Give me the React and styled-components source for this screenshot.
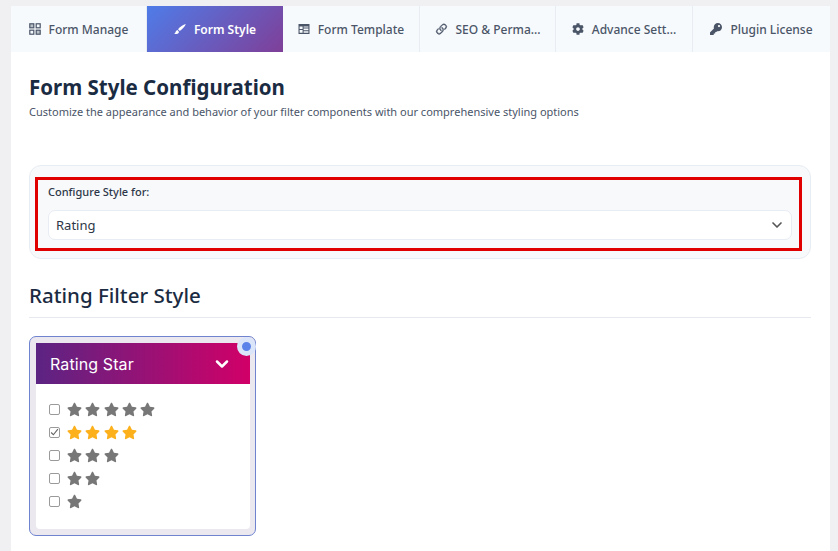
import React from "react";
import styled, { createGlobalStyle } from "styled-components";
import { FaCog, FaKey, FaStar } from "react-icons/fa";
import { BsLink45Deg } from "react-icons/bs";
import { ChevronDown } from "lucide-react";

const GlobalStyle = createGlobalStyle`
  html, body { margin: 0; padding: 0; background: #f0f0f2; height: 551px; overflow: hidden; }
  * { box-sizing: border-box; }
  body { font-family: "Noto Sans", "Open Sans", sans-serif; }
`;

const Page = styled.div`
  width: 838px;
  height: 551px;
  padding: 6px 8px 0 11px;
  overflow: hidden;
`;

const Panel = styled.div`
  background: #fff;
  height: 545px;
`;

const TabBar = styled.div`
  display: flex;
  height: 46px;
  background: #f7fafc;
`;

const Tab = styled.div`
  width: ${(p) => p.$w}px;
  flex: none;
  display: flex;
  align-items: center;
  justify-content: center;
  gap: 8px;
  font-size: 12px;
  font-weight: ${(p) => (p.$active ? 600 : 500)};
  color: ${(p) => (p.$active ? "#fff" : "#4a5568")};
  background: ${(p) => (p.$active ? "linear-gradient(135deg, #4f7ce8, #7f3f98)" : "transparent")};
  border-right: ${(p) => (p.$active || p.$last ? "none" : "1px solid #e8edf3")};
  white-space: nowrap;
  svg { width: 12px; height: 12px; flex: none; }
`;

const LinkGlyph = styled(BsLink45Deg)`
  && { width: 15px; height: 15px; margin-right: -2px; stroke: currentColor; stroke-width: 0.4; }
`;

const Content = styled.div`
  padding: 21px 19px 0 18px;
`;

const Title = styled.h1`
  margin: 0;
  font-size: 20.5px;
  line-height: 29px;
  font-weight: 700;
  color: #1a2b42;
`;

const Subtitle = styled.p`
  margin: 2px 0 0;
  font-size: 11px;
  line-height: 16px;
  color: #4a5568;
`;

const ConfigBox = styled.div`
  margin-top: 45px;
  height: 94px;
  padding: 11px 8px 0 5px;
  background: #f7f9fb;
  border: 1px solid #e8edf3;
  border-radius: 12px;
`;

const Highlight = styled.div`
  height: 74px;
  padding: 4px 7px 0 10px;
  border: 3px solid #e00000;
`;

const Label = styled.div`
  font-size: 11px;
  line-height: 16px;
  font-weight: 500;
  color: #2d3748;
`;

const Select = styled.div`
  margin-top: 10px;
  height: 30px;
  padding: 0 6px 0 7px;
  display: flex;
  align-items: center;
  justify-content: space-between;
  background: #fff;
  border: 1px solid #e8edf3;
  border-radius: 7px;
  font-size: 13px;
  color: #2d3748;
  svg { width: 16px; height: 16px; color: #555; }
`;

const SectionTitle = styled.h2`
  margin: 22px 0 0;
  padding-bottom: 8px;
  font-size: 20.5px;
  line-height: 28px;
  font-weight: 500;
  color: #1a2b42;
  border-bottom: 1px solid #e6e9ee;
`;

const StyleCard = styled.div`
  position: relative;
  margin-top: 18px;
  width: 227px;
  height: 200px;
  padding: 6px 5px 6px 6px;
  background: #ece8f0;
  border: 1px solid #6f83cf;
  border-radius: 7px;
`;

const SelectedDot = styled.span`
  position: absolute;
  top: 0;
  right: -1px;
  width: 19px;
  height: 19px;
  border-radius: 50%;
  background: #5b82e8;
  border: 5px solid #dbe5fa;
`;

const Preview = styled.div`
  height: 100%;
  background: #fff;
  border-radius: 0 0 4px 4px;
`;

const PreviewHead = styled.div`
  height: 41px;
  padding: 0 18px 0 14px;
  display: flex;
  align-items: center;
  justify-content: space-between;
  background: linear-gradient(90deg, #5b2483, #d10068);
  color: #fff;
  font-family: "Inter", sans-serif;
  font-size: 16px;
  letter-spacing: 0.1px;
  svg { width: 20px; height: 20px; }
`;

const RatingList = styled.div`
  padding: 17px 0 0 13px;
  display: flex;
  flex-direction: column;
  gap: 7px;
`;

const RatingRow = styled.div`
  height: 16px;
  display: flex;
  align-items: center;
`;

const Check = styled.span`
  width: 11px;
  height: 11px;
  flex: none;
  margin-right: 7px;
  display: flex;
  align-items: center;
  justify-content: center;
  border: 1px solid #9a9a9a;
  border-radius: 2px;
  background: #fff;
`;

const Stars = styled.span`
  display: flex;
  gap: 3.3px;
  color: ${(p) => (p.$on ? "#fbb01c" : "#777")};
  svg { font-size: 15px; }
`;

const ManageIcon = () => (
  <svg viewBox="0 0 12 12" fill="none" stroke="currentColor" strokeWidth="1.2">
    <rect x="0.8" y="0.8" width="4" height="4" fill="currentColor" fillOpacity="0.35" />
    <rect x="7.2" y="0.8" width="4" height="4" />
    <rect x="0.8" y="7.2" width="4" height="4" />
    <rect x="7.2" y="7.2" width="4" height="4" fill="currentColor" fillOpacity="0.35" />
  </svg>
);

const BrushIcon = () => (
  <svg viewBox="0 0 12 12" fill="currentColor">
    <path d="M11.8 1c-2.6.6-6 3-7.8 5.2L5.8 8C8.2 6.2 11 3.600 11.800 1zM3.400 7C2 7.400 1.800 8.400 1.400 9.400c-.2.500-.6.800-1.200 1 1.600 1 3.600.8 4.400-.4.400-.6.400-1.200.2-1.600z" />
  </svg>
);

const TemplateIcon = () => (
  <svg viewBox="0 0 12 12">
    <path fill="currentColor" d="M0.5 1h11v10h-11z" />
    <path fill="#f7fafc" d="M1.600 3.400h3v2.600h-3zM5.600 3.400h4.800v1.200h-4.800zM5.600 5.600h4.800v1.600h-4.800zM1.600 7h3v2.800h-3zM5.600 8.200h4.800v1.600h-4.800z" />
  </svg>
);

const tabs = [
  { label: "Form Manage", w: 136, icon: <ManageIcon /> },
  { label: "Form Style", w: 136, icon: <BrushIcon />, active: true },
  { label: "Form Template", w: 137, icon: <TemplateIcon /> },
  { label: "SEO & Perma...", w: 136, icon: <LinkGlyph /> },
  { label: "Advance Sett...", w: 137, icon: <FaCog /> },
  { label: "Plugin License", w: 137, icon: <FaKey />, last: true },
];

const ratings = [5, 4, 3, 2, 1];

export default function App() {
  return (
    <Page>
      <GlobalStyle />
      <Panel>
        <TabBar>
          {tabs.map((t) => (
            <Tab key={t.label} $w={t.w} $active={t.active} $last={t.last}>
              {t.icon}
              {t.label}
            </Tab>
          ))}
        </TabBar>
        <Content>
          <Title>Form Style Configuration</Title>
          <Subtitle>
            Customize the appearance and behavior of your filter components with our comprehensive styling options
          </Subtitle>
          <ConfigBox>
            <Highlight>
              <Label>Configure Style for:</Label>
              <Select>
                Rating
                <ChevronDown strokeWidth={2.5} />
              </Select>
            </Highlight>
          </ConfigBox>
          <SectionTitle>Rating Filter Style</SectionTitle>
          <StyleCard>
            <SelectedDot />
            <Preview>
              <PreviewHead>
                Rating Star
                <ChevronDown strokeWidth={3} />
              </PreviewHead>
              <RatingList>
                {ratings.map((n) => (
                  <RatingRow key={n}>
                    <Check>
                      {n === 4 && (
                        <svg width="9" height="9" viewBox="0 0 8 8">
                          <path d="M1 4l2 2 4-5" fill="none" stroke="#666" strokeWidth="1" />
                        </svg>
                      )}
                    </Check>
                    <Stars $on={n === 4}>
                      {Array.from({ length: n }, (_, i) => (
                        <FaStar key={i} />
                      ))}
                    </Stars>
                  </RatingRow>
                ))}
              </RatingList>
            </Preview>
          </StyleCard>
        </Content>
      </Panel>
    </Page>
  );
}
